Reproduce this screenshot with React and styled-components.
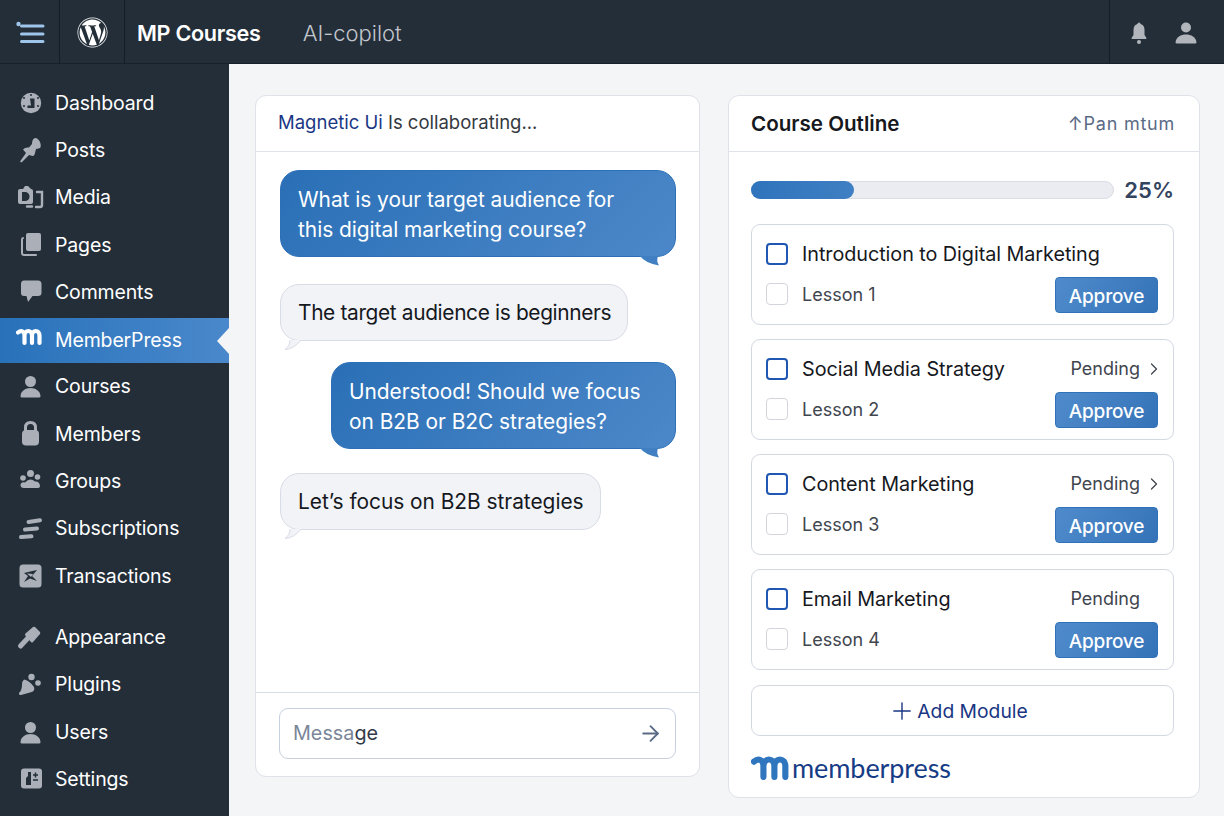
import React from "react";
import styled, { createGlobalStyle } from "styled-components";
import { FaWordpress } from "react-icons/fa";
import { ArrowRight, ChevronRight, Plus } from "lucide-react";

const NAVY = "#1a3784";
const DARK = "#232e39";
const PAGE_BG = "#f4f5f7";

const GlobalStyle = createGlobalStyle`
  html, body {
    margin: 0;
    padding: 0;
    background: ${PAGE_BG};
    font-family: Inter, "Liberation Sans", sans-serif;
  }
  * {
    box-sizing: border-box;
  }
`;

const Page = styled.div`
  width: 1224px;
  height: 816px;
  overflow: hidden;
  display: flex;
  flex-direction: column;
`;

const TopBar = styled.header`
  flex: 0 0 64px;
  display: flex;
  align-items: stretch;
  background: ${DARK};
  border-bottom: 1px solid #18212a;
`;

const TopCell = styled.div`
  width: ${(p) => p.$width}px;
  padding-top: 1px;
  display: flex;
  align-items: center;
  justify-content: center;
  border-right: 1px solid #141c24;
`;

const Brand = styled.div`
  margin-left: 12px;
  padding-top: 2px;
  font-size: 21.6px;
  font-weight: 600;
  letter-spacing: -0.3px;
  color: #fff;
  display: flex;
  align-items: center;
`;

const SubBrand = styled.div`
  margin-left: 42px;
  padding-top: 2px;
  font-size: 22px;
  font-weight: 300;
  color: #c3c7cd;
  display: flex;
  align-items: center;
`;

const TopRight = styled.div`
  margin-left: auto;
  width: 115px;
  display: flex;
  align-items: center;
  gap: 26px;
  padding: 3px 0 0 20px;
  border-left: 1px solid #141c24;
`;

const Body = styled.div`
  flex: 1;
  display: flex;
  min-height: 0;
`;

const Sidebar = styled.nav`
  width: 229px;
  padding-top: 15px;
  background: ${DARK};
  display: flex;
  flex-direction: column;
`;

const NavItem = styled.div`
  position: relative;
  flex: 0 0 ${(p) => (p.$active ? "45px" : "47.3px")};
  margin-top: ${(p) => (p.$spaced ? "14px" : p.$active ? "2.3px" : "0")};
  display: flex;
  align-items: center;
  gap: 11px;
  padding-left: 16px;
  font-size: 19.5px;
  letter-spacing: -0.15px;
  color: #fff;
  background: ${(p) =>
    p.$active ? "linear-gradient(90deg, #2872ba, #4a88cb)" : "transparent"};
  ${(p) =>
    p.$active &&
    `&::after {
      content: "";
      position: absolute;
      right: 0;
      top: 10px;
      border-style: solid;
      border-width: 13px 12px 13px 0;
      border-color: transparent ${PAGE_BG} transparent transparent;
    }`}
`;

const Glyph = styled.svg`
  flex: 0 0 28px;
  width: 28px;
  height: 28px;
  color: #abb0b8;
`;

const Main = styled.main`
  flex: 1;
  display: flex;
  align-items: flex-start;
  gap: 28px;
  padding: 31px 24px 0 26px;
  background: ${PAGE_BG};
`;

const Card = styled.section`
  width: ${(p) => p.$width}px;
  height: ${(p) => p.$height}px;
  display: flex;
  flex-direction: column;
  background: #fff;
  border: 1px solid #dfe2e9;
  border-radius: 11px;
`;

const CardHeader = styled.div`
  flex: 0 0 56px;
  display: flex;
  align-items: center;
  justify-content: space-between;
  padding: 0 24px 0 22px;
  border-bottom: 1px solid #e0e3e9;
`;

const ChatTitle = styled.div`
  margin-bottom: 4px;
  font-size: 18.5px;
  color: #34383f;
`;

const Accent = styled.span`
  color: ${NAVY};
`;

const Messages = styled.div`
  flex: 1;
  display: flex;
  flex-direction: column;
  padding: 18px 23px 0 24px;
`;

const Bubble = styled.div`
  position: relative;
  width: ${(p) => p.$width}px;
  align-self: ${(p) => (p.$mine ? "flex-end" : "flex-start")};
  margin-bottom: ${(p) => p.$after}px;
  padding: ${(p) => (p.$mine ? "13.5px 0 11.5px 17px" : "12.5px 0 12.5px 17px")};
  border-radius: 19px;
  font-size: 20.9px;
  line-height: 30px;
  letter-spacing: ${(p) => (p.$tight ? "-0.36px" : "-0.03px")};
  white-space: nowrap;
  color: ${(p) => (p.$mine ? "#fff" : "#15181d")};
  background: ${(p) =>
    p.$mine ? "linear-gradient(135deg, #2a6fb6, #4c88c9)" : "#f2f3f7"};
  border: 1px solid ${(p) => (p.$mine ? "#2c70b8" : "#d8dce5")};
`;

const Tail = styled.svg`
  position: absolute;
  width: 24px;
  height: 14px;
  top: 100%;
  margin-top: -2px;
  ${(p) => (p.$mine ? "right: 12px;" : "left: 3px;")}
`;

const ChatFooter = styled.div`
  flex: 0 0 84px;
  padding: 15px 23px 0;
  border-top: 1px solid #d7dce5;
`;

const MessageBox = styled.div`
  height: 51px;
  display: flex;
  align-items: center;
  justify-content: space-between;
  padding: 0 12px 1px 13px;
  border: 1px solid #c6d0de;
  border-radius: 9px;
  font-size: 19.8px;
  color: #7b8699;
`;

const Ink = styled.span`
  color: #323a4a;
`;

const OutlineTitle = styled.div`
  font-size: 20.6px;
  font-weight: 600;
  color: #16181d;
`;

const OutlineTag = styled.div`
  font-size: 18px;
  letter-spacing: 0.75px;
  color: #5b6b86;
  white-space: pre;
`;

const OutlineBody = styled.div`
  flex: 1;
  display: flex;
  flex-direction: column;
  padding: 29px 25px 0 22px;
`;

const ProgressRow = styled.div`
  display: flex;
  align-items: center;
  justify-content: space-between;
  height: 18px;
  margin-bottom: 25px;
`;

const Track = styled.div`
  width: 363px;
  height: 18px;
  background: #ebecf1;
  border: 1px solid #dadde4;
  border-radius: 9px;
`;

const Fill = styled.div`
  height: 18px;
  margin: -1px;
  border-radius: 9px;
  background: linear-gradient(90deg, #2f74bc, #3f7fc3);
`;

const Percent = styled.div`
  font-size: 22px;
  font-weight: 600;
  color: #33445f;
`;

const ModuleList = styled.div`
  display: flex;
  flex-direction: column;
  gap: 14px;
  margin-bottom: 15px;
`;

const Module = styled.div`
  height: 101px;
  padding: 18px 15px 0 14px;
  border: 1px solid #d3d8e1;
  border-radius: 9px;
  display: flex;
  flex-direction: column;
  gap: 12px;
`;

const ModuleTop = styled.div`
  height: 22px;
  display: flex;
  align-items: center;
  gap: 14px;
`;

const ModuleBottom = styled.div`
  height: 36px;
  display: flex;
  align-items: center;
  gap: 14px;

  > :not(button) {
    margin-bottom: 2px;
  }
`;

const Box = styled.div`
  flex: 0 0 22px;
  height: 22px;
  border-radius: 4px;
  border: ${(p) => (p.$strong ? "2px solid #2057b3" : "1.5px solid #d2d5db")};
`;

const ModuleTitle = styled.div`
  flex: 1;
  font-size: 19.8px;
  letter-spacing: -0.05px;
  color: #16181d;
`;

const LessonName = styled.div`
  flex: 1;
  font-size: 18px;
  color: #40454e;
`;

const Status = styled.div`
  margin-bottom: 1px;
  font-size: 18px;
  color: #40454e;
`;

const StatusSlot = styled.div`
  flex: 0 0 24px;
  margin-left: -12px;
  margin-right: -8px;
  display: flex;
  justify-content: center;
  color: #40454e;
`;

const ApproveButton = styled.button`
  width: 103px;
  height: 36px;
  padding: 2px 0 0;
  border: 1px solid #2f72b8;
  border-radius: 4px;
  background: linear-gradient(120deg, #4f8bcc, #3573b8);
  font-family: inherit;
  font-size: 19px;
  font-weight: 500;
  letter-spacing: -0.2px;
  color: #fff;
`;

const AddButton = styled.button`
  height: 51px;
  display: flex;
  align-items: center;
  justify-content: center;
  gap: 6px;
  margin-bottom: 21px;
  padding: 0 4px 0 0;
  background: #fff;
  border: 1px solid #d3d8e1;
  border-radius: 9px;
  font-family: inherit;
  font-size: 19.3px;
  color: ${NAVY};
`;

const AddPlus = styled(Plus)`
  margin: 0 -5px;
`;

const LogoRow = styled.div`
  display: flex;
  align-items: center;
  gap: 3px;
  margin-top: -2px;
`;

const LogoMark = styled.svg`
  width: 38px;
  height: 25px;
`;

const LogoText = styled.div`
  font-size: 27px;
  line-height: 24px;
  font-weight: 400;
  letter-spacing: -0.1px;
  color: #163c86;
  font-family: Lato, Inter, sans-serif;
`;

const MemberMark = ({ color = "#fff" }) => (
  <path
    d="M2 6.5 C5 4 8.5 5 8.5 9.5 V17 M8.5 9.5 C8.5 3.5 16 3.5 16 9.5 V17 M16 9.5 C16 3.5 23.5 3.5 23.5 9.5 V17"
    fill="none"
    stroke={color}
    strokeWidth="4.2"
    strokeLinecap="round"
  />
);

const icons = {
  dashboard: (
    <>
      <circle cx="15" cy="14" r="10.2" fill="currentColor" />
      <path d="M14 9.5h4.5v9.5h-7v-2.5h3.5z" fill={DARK} />
      <circle cx="8" cy="9" r="1" fill={DARK} />
      <circle cx="8" cy="17" r="1" fill={DARK} />
      <circle cx="22" cy="9" r="1" fill={DARK} />
      <circle cx="22" cy="17" r="1" fill={DARK} />
      <circle cx="15" cy="6" r="1" fill={DARK} />
    </>
  ),
  posts: (
    <path
      d="M4 25.5 L10 17 L7 13.5 Q9 11 13 11.5 L16 8 Q16 3 19 2 Q22 2 24 6 Q25.5 10 24 12 Q21 13 20 13 L19 17 Q18.5 20 16.5 20 L13 19 L5.5 26.5 Z"
      fill="currentColor"
    />
  ),
  media: (
    <>
      <path
        d="M2 8 Q2 6 4 6 H7 L9 3 H12 L15 6 Q17 6 17 8 V19 Q17 21 15 21 H4 Q2 21 2 19 Z"
        fill="currentColor"
      />
      <path d="M6 9 H10 Q13.5 10 13.5 13.5 Q13.5 17 10 18 H6 Z" fill={DARK} />
      <path
        d="M21 9 H26 V22 Q26 24 24 24 H20 M11 23.5 H16"
        fill="none"
        stroke="currentColor"
        strokeWidth="2.4"
        strokeLinecap="round"
      />
    </>
  ),
  pages: (
    <>
      <rect x="10" y="2" width="15" height="18" rx="2" fill="currentColor" />
      <path
        d="M7 7 Q6 7 6 8.5 V22 Q6 24 8 24 H20"
        fill="none"
        stroke="currentColor"
        strokeWidth="2"
        strokeLinecap="round"
      />
    </>
  ),
  comments: (
    <path
      d="M8 2.5 H22 Q25.5 2.5 25.5 6 V15 Q25.5 18 22 18 H16.5 L12 24 L10.5 18 H8 Q5 18 5 15 V6 Q5 2.5 8 2.5 Z"
      fill="currentColor"
    />
  ),
  user: (
    <>
      <circle cx="14.5" cy="9.5" r="5.5" fill="currentColor" />
      <path
        d="M4.5 24.5 C4.5 19 9.5 16 14.5 16 S24.5 19 24.5 24.5 Q24.5 25.5 23 25.5 H6 Q4.5 25.5 4.5 24.5 Z"
        fill="currentColor"
      />
    </>
  ),
  lock: (
    <>
      <path
        d="M9.5 12 V7.5 Q9.5 2.5 14.5 2.5 T19.5 7.5 V12"
        fill="none"
        stroke="currentColor"
        strokeWidth="3"
      />
      <rect x="6" y="10" width="17" height="15.5" rx="4" fill="currentColor" />
    </>
  ),
  groups: (
    <>
      <circle cx="14.5" cy="6.5" r="3.5" fill="currentColor" />
      <circle cx="7" cy="11" r="2.8" fill="currentColor" />
      <circle cx="21.5" cy="10" r="2.8" fill="currentColor" />
      <path
        d="M4.5 18 Q5 14.5 9 15.5 Q14 10 19 14.5 Q23.5 14 24 19 Q24 21 21 21 H8 Q4.5 21 4.5 18 Z"
        fill="currentColor"
      />
    </>
  ),
  subs: (
    <path
      d="M12.5 8 L24 6.3 M9 15.5 L21 14.5 M5 23 L15.5 22.3"
      fill="none"
      stroke="currentColor"
      strokeWidth="4"
      strokeLinecap="round"
    />
  ),
  transactions: (
    <>
      <rect x="3.5" y="2.5" width="22" height="23" rx="3.5" fill="currentColor" />
      <path
        d="M8 11 Q14 9.5 21 8 L16 14 L21 19 L14 16.5 L8 20 L12 14 Z"
        fill={DARK}
      />
      <path d="M11 11.5 L17 12 L15 15 Z" fill="currentColor" />
    </>
  ),
  brush: (
    <>
      <path
        d="M4.5 23 L12 15"
        fill="none"
        stroke="currentColor"
        strokeWidth="5"
        strokeLinecap="round"
      />
      <path
        d="M9.5 10.5 L17 4 Q18 3.5 19 4 L24 9 Q24.5 10 24 11 L17 19 Q16 20 15 19 L9.5 13 Q8.5 11.5 9.5 10.5 Z"
        fill="currentColor"
      />
    </>
  ),
  plugin: (
    <>
      <circle cx="15.5" cy="7" r="3.2" fill="currentColor" />
      <circle cx="22" cy="13" r="2.8" fill="currentColor" />
      <path
        d="M8 9.5 Q13 10 18 17 Q19.5 21.5 14 22.5 L5 25 Q2.5 25.5 3 23 Q6 20 6 15 Q6 11 8 9.5 Z"
        fill="currentColor"
      />
    </>
  ),
  settings: (
    <>
      <rect x="5" y="3.5" width="21" height="20" rx="3" fill="currentColor" />
      <path d="M12 7 L15 7 V20 H10 V13 L12 11 Z" fill={DARK} />
      <path
        d="M17 10 H22 M19.5 7.5 V12.5 M17 15 H22"
        fill="none"
        stroke={DARK}
        strokeWidth="1.5"
      />
    </>
  ),
  member: <MemberMark />,
};

const nav = [
  ["dashboard", "Dashboard"],
  ["posts", "Posts"],
  ["media", "Media"],
  ["pages", "Pages"],
  ["comments", "Comments"],
  ["member", "MemberPress", true],
  ["user", "Courses"],
  ["lock", "Members"],
  ["groups", "Groups"],
  ["subs", "Subscriptions"],
  ["transactions", "Transactions"],
  ["brush", "Appearance", false, true],
  ["plugin", "Plugins"],
  ["user", "Users"],
  ["settings", "Settings"],
];

const modules = [
  { title: "Introduction to Digital Marketing", lesson: "Lesson 1" },
  { title: "Social Media Strategy", lesson: "Lesson 2", status: "Pending", more: true },
  { title: "Content Marketing", lesson: "Lesson 3", status: "Pending", more: true },
  { title: "Email Marketing", lesson: "Lesson 4", status: "Pending" },
];

function MenuIcon() {
  return (
    <svg width="30" height="30" viewBox="0 0 30 30">
      <circle cx="3.5" cy="7" r="2.2" fill="#9fc6ea" />
      <path
        d="M6.5 9 H28 M6.5 17 H28 M6.5 24.5 H28"
        stroke="#9fc6ea"
        strokeWidth="3"
        strokeLinecap="round"
      />
    </svg>
  );
}

function BellIcon() {
  return (
    <svg width="18" height="24" viewBox="0 0 18 24">
      <path
        d="M9 1.5 Q10.5 1.5 10.5 3 Q14.5 4 14.5 9 V14 L16.5 17 Q16.5 18 15.5 18 H2.5 Q1.5 18 1.5 17 L3.5 14 V9 Q3.5 4 7.5 3 Q7.5 1.5 9 1.5 Z"
        fill="#b2b6bc"
      />
      <circle cx="9" cy="21" r="2" fill="#b2b6bc" />
    </svg>
  );
}

function UserIcon() {
  return (
    <svg width="24" height="24" viewBox="0 0 24 24">
      <circle cx="12" cy="6.5" r="5" fill="#b2b6bc" />
      <path
        d="M1.5 21.5 C2 16 7 13.5 12 13.5 S22 16 22.5 21.5 Q22.5 22.5 21 22.5 H3 Q1.5 22.5 1.5 21.5 Z"
        fill="#b2b6bc"
      />
    </svg>
  );
}

function BubbleTail({ mine }) {
  return (
    <Tail $mine={mine} viewBox="0 0 24 14">
      {mine ? (
        <path d="M1 2 Q6 9 20 11.5 Q17 7 19 2 Z" fill="#3f7fc2" />
      ) : (
        <path
          d="M6 2 Q6 8 1 11.5 Q10 11 17 2"
          fill="#f2f3f7"
          stroke="#d8dce5"
          strokeWidth="1"
        />
      )}
    </Tail>
  );
}

function ChatBubble({ mine, tight, width, after, children }) {
  return (
    <Bubble $mine={mine} $tight={tight} $width={width} $after={after}>
      {children}
      <BubbleTail mine={mine} />
    </Bubble>
  );
}

export default function App() {
  return (
    <Page>
      <GlobalStyle />
      <TopBar>
        <TopCell $width={60}>
          <MenuIcon />
        </TopCell>
        <TopCell $width={65}>
          <FaWordpress size={31} color="#fff" />
        </TopCell>
        <Brand>MP Courses</Brand>
        <SubBrand>AI-copilot</SubBrand>
        <TopRight>
          <BellIcon />
          <UserIcon />
        </TopRight>
      </TopBar>
      <Body>
        <Sidebar>
          {nav.map(([icon, label, active, spaced]) => (
            <NavItem key={label} $active={active} $spaced={spaced}>
              <Glyph viewBox="0 0 28 28">{icons[icon]}</Glyph>
              {label}
            </NavItem>
          ))}
        </Sidebar>
        <Main>
          <Card $width={445} $height={682}>
            <CardHeader>
              <ChatTitle>
                <Accent>Magnetic Ui</Accent> Is collaborating...
              </ChatTitle>
            </CardHeader>
            <Messages>
              <ChatBubble mine width={396} after={27}>
                What is your target audience for
                <br />
                this digital marketing course?
              </ChatBubble>
              <ChatBubble tight width={348} after={21}>
                The target audience is beginners
              </ChatBubble>
              <ChatBubble mine width={345} after={24}>
                Understood! Should we focus
                <br />
                on B2B or B2C strategies?
              </ChatBubble>
              <ChatBubble width={321} after={0}>
                Let’s focus on B2B strategies
              </ChatBubble>
            </Messages>
            <ChatFooter>
              <MessageBox>
                <span>
                  Messa<Ink>ge</Ink>
                </span>
                <ArrowRight size={25} strokeWidth={1.8} color="#5b6b86" />
              </MessageBox>
            </ChatFooter>
          </Card>
          <Card $width={472} $height={703}>
            <CardHeader>
              <OutlineTitle>Course Outline</OutlineTitle>
              <OutlineTag>↑Pan mtum</OutlineTag>
            </CardHeader>
            <OutlineBody>
              <ProgressRow>
                <Track>
                  <Fill style={{ width: "28.5%" }} />
                </Track>
                <Percent>25%</Percent>
              </ProgressRow>
              <ModuleList>
                {modules.map((m) => (
                  <Module key={m.lesson}>
                    <ModuleTop>
                      <Box $strong />
                      <ModuleTitle>{m.title}</ModuleTitle>
                      {m.status && <Status>{m.status}</Status>}
                      {m.status && (
                        <StatusSlot>
                          {m.more && <ChevronRight size={20} strokeWidth={1.5} />}
                        </StatusSlot>
                      )}
                    </ModuleTop>
                    <ModuleBottom>
                      <Box />
                      <LessonName>{m.lesson}</LessonName>
                      <ApproveButton>Approve</ApproveButton>
                    </ModuleBottom>
                  </Module>
                ))}
              </ModuleList>
              <AddButton>
                <AddPlus size={28} strokeWidth={1.2} />
                Add Module
              </AddButton>
              <LogoRow>
                <LogoMark viewBox="0 2 26 17">
                  <MemberMark color="#2f76bf" />
                </LogoMark>
                <LogoText>memberpress</LogoText>
              </LogoRow>
            </OutlineBody>
          </Card>
        </Main>
      </Body>
    </Page>
  );
}
